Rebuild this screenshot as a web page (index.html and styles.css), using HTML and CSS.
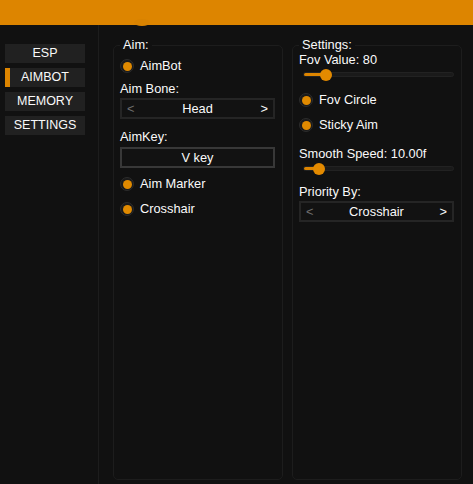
FILE: index.html
```html
<!DOCTYPE html>
<html lang="en">
<head>
  <meta charset="UTF-8" />
  <meta name="viewport" content="width=device-width, initial-scale=1.0"/>
  <title>Menu</title>
  <link rel="stylesheet" href="styles.css">
</head>
<body>

<header class="topbar"></header>

<div class="main">
  <nav class="sidebar">
    <div class="tab">ESP</div>
    <div class="tab active">AIMBOT</div>
    <div class="tab">MEMORY</div>
    <div class="tab">SETTINGS</div>
  </nav>

  <div class="content">
    <fieldset class="panel aim">
      <legend>Aim:</legend>
      <div class="check first"><span class="dot"></span>AimBot</div>
      <div class="caption">Aim Bone:</div>
      <div class="combo"><span class="prev">&lt;</span><span>Head</span><span class="next">&gt;</span></div>
      <div class="caption">AimKey:</div>
      <div class="keybox">V key</div>
      <div class="check"><span class="dot"></span>Aim Marker</div>
      <div class="check"><span class="dot"></span>Crosshair</div>
    </fieldset>

    <fieldset class="panel settings">
      <legend>Settings:</legend>
      <div class="caption first">Fov Value: 80</div>
      <div class="slider"><div class="track"><div class="fill" style="width:22px"></div></div></div>
      <div class="check"><span class="dot"></span>Fov Circle</div>
      <div class="check"><span class="dot"></span>Sticky Aim</div>
      <div class="caption wide">Smooth Speed: 10.00f</div>
      <div class="slider"><div class="track"><div class="fill" style="width:15px"></div></div></div>
      <div class="caption">Priority By:</div>
      <div class="combo"><span class="prev">&lt;</span><span>Crosshair</span><span class="next">&gt;</span></div>
    </fieldset>
  </div>
</div>

</body>
</html>
```

FILE: styles.css
```css
* {
  box-sizing: border-box;
}

body {
  margin: 0;
  background: #111111;
  color: #fafafa;
  font-family: "Liberation Sans", Arial, sans-serif;
  font-size: 12.8px;
  line-height: 14px;
  height: 484px;
  overflow: hidden;
}

.topbar {
  position: relative;
  height: 25px;
  background: #dd8500;
}

/* bottom of the logo circle peeking under the bar */
.topbar::after {
  content: "";
  position: absolute;
  left: 134px;
  top: 19px;
  width: 16px;
  height: 7px;
  border-radius: 50%;
  background: #d98300;
}

.main {
  display: flex;
  height: 459px;
}

.sidebar {
  width: 99px;
  border-right: 1px solid #1d1d1d;
  padding: 19px 0 0 5px;
  display: flex;
  flex-direction: column;
  gap: 5px;
}

.tab {
  position: relative;
  width: 80px;
  height: 19px;
  line-height: 19px;
  background: #212121;
  text-align: center;
  font-size: 12.5px;
}

.tab.active::before {
  content: "";
  position: absolute;
  left: 0;
  top: 0;
  bottom: 0;
  width: 5px;
  background: #dd8500;
}

.content {
  display: flex;
  gap: 9px;
  padding-left: 14px;
}

.panel {
  margin: 13px 0 0 0;
  width: 170px;
  height: 442px;
  border: 1px solid #1d1d1d;
  border-radius: 5px;
  padding: 0 7px 0 6px;
  min-width: 0;
}

.panel legend {
  padding: 0 3px;
  margin-left: 0;
  line-height: 14px;
}

.check {
  display: flex;
  align-items: center;
  gap: 6px;
  height: 14px;
  margin-top: 11px;
}

.check.first {
  margin-top: 7px;
}

.dot {
  width: 14px;
  height: 14px;
  border-radius: 50%;
  background: #1a1a1a;
  border: 1px solid #2c2c2c;
  display: flex;
  align-items: center;
  justify-content: center;
}

.dot::after {
  content: "";
  width: 9px;
  height: 9px;
  border-radius: 50%;
  background: #e08a00;
}

.caption {
  margin-top: 11px;
}

.caption.first {
  margin-top: 1px;
}

.caption.wide {
  margin-top: 15px;
}

.aim .caption {
  margin-top: 9px;
}

.aim .combo + .caption {
  margin-top: 11px;
}

.aim .keybox + .check {
  margin-top: 9px;
}

.combo {
  margin-top: 2px;
  height: 21px;
  border: 2px solid #252525;
  background: #121212;
  display: flex;
  align-items: center;
  justify-content: space-between;
  padding: 0 5px;
}

.combo .prev {
  color: #6e6e6e;
}

.keybox {
  margin-top: 3px;
  height: 21px;
  border: 2px solid #383838;
  background: #121212;
  text-align: center;
  line-height: 17px;
}

.slider {
  margin-top: 1px;
  height: 12px;
  display: flex;
  align-items: center;
  padding: 0 0 0 4px;
}

.slider + .check {
  margin-top: 13px;
}

.track {
  position: relative;
  width: 153px;
  height: 5px;
  border-radius: 3px;
  background: #1a1a1a;
  border: 1px solid #222;
}

.fill {
  height: 100%;
  border-radius: 3px;
  background: #dd8500;
  position: relative;
}

.fill::after {
  content: "";
  position: absolute;
  right: -6px;
  top: -4px;
  width: 12px;
  height: 12px;
  border-radius: 50%;
  background: #e38a00;
}
```
